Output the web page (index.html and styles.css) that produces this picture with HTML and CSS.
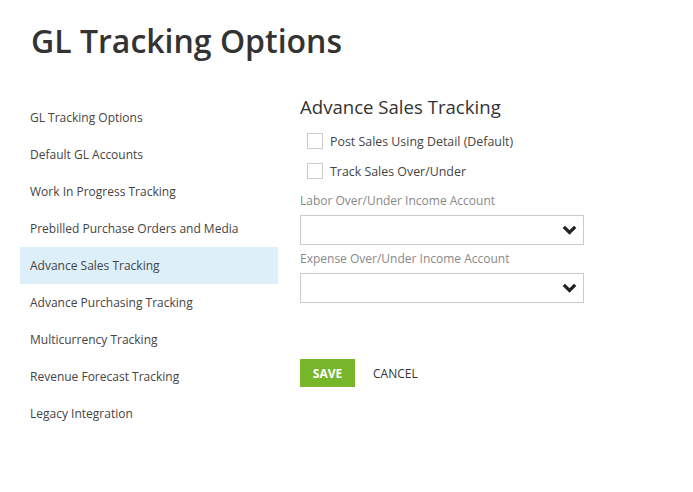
FILE: index.html
```html
<!DOCTYPE html>
<html>
<head>
<meta charset="utf-8">
<link rel="stylesheet" href="styles.css">
</head>
<body>
<div class="page">
  <h1 class="title">GL Tracking Options</h1>
  <div class="main">
    <ul class="nav">
      <li class="nav-item">GL Tracking Options</li>
      <li class="nav-item">Default GL Accounts</li>
      <li class="nav-item">Work In Progress Tracking</li>
      <li class="nav-item">Prebilled Purchase Orders and Media</li>
      <li class="nav-item active">Advance Sales Tracking</li>
      <li class="nav-item">Advance Purchasing Tracking</li>
      <li class="nav-item">Multicurrency Tracking</li>
      <li class="nav-item">Revenue Forecast Tracking</li>
      <li class="nav-item">Legacy Integration</li>
    </ul>
    <div class="content">
      <h2 class="section-title">Advance Sales Tracking</h2>
      <div class="checks">
        <label class="check"><span class="box"></span>Post Sales Using Detail (Default)</label>
        <label class="check"><span class="box"></span>Track Sales Over/Under</label>
      </div>
      <div class="field">
        <div class="field-label">Labor Over/Under Income Account</div>
        <div class="select">
          <svg class="chev" width="15" height="10" viewBox="0 0 15 10"><path d="M1.8 1.8 L7.5 7.5 L13.2 1.8" fill="none" stroke="#222" stroke-width="3.2"/></svg>
        </div>
      </div>
      <div class="field">
        <div class="field-label">Expense Over/Under Income Account</div>
        <div class="select">
          <svg class="chev" width="15" height="10" viewBox="0 0 15 10"><path d="M1.8 1.8 L7.5 7.5 L13.2 1.8" fill="none" stroke="#222" stroke-width="3.2"/></svg>
        </div>
      </div>
      <div class="actions">
        <button class="btn-save">SAVE</button>
        <button class="btn-cancel">CANCEL</button>
      </div>
    </div>
  </div>
</div>
</body>
</html>
```
FILE: styles.css
```css
* { box-sizing: border-box; }
html, body { margin: 0; padding: 0; background: #fff; }
body { font-family: "Open Sans", "Noto Sans", sans-serif; color: #444; }
.page { padding: 20px 20px 0 20px; }
.title {
  margin: 0 0 0 11px;
  font-size: 32px;
  font-weight: 600;
  color: #333;
  line-height: 42px;
}
.main { display: flex; margin-top: 37px; }
.nav { list-style: none; margin: 0; padding: 0; width: 258px; }
.nav-item {
  height: 37px;
  line-height: 37px;
  padding-left: 10px;
  font-size: 12px;
  color: #444;
}
.nav-item.active { background: #ddeff9; }
.content { margin-left: 22px; width: 284px; }
.section-title {
  margin: -5px 0 0 0;
  font-size: 18.6px;
  font-weight: 400;
  color: #333;
  line-height: 26px;
}
.checks { margin-top: 6px; }
.check {
  display: flex;
  align-items: center;
  height: 30px;
  font-size: 12.4px;
  color: #444;
}
.box {
  width: 16px; height: 16px;
  border: 1px solid #ccc;
  margin-left: 7px;
  margin-right: 7px;
  background: #fff;
}
.field { margin-top: 7px; }
.field + .field { margin-top: 6px; }
.field-label { font-size: 12px; color: #888; line-height: 16px; }
.select {
  margin-top: 6px;
  height: 30px;
  border: 1px solid #ccc;
  display: flex;
  align-items: center;
  justify-content: flex-end;
  padding-right: 6px;
}
.actions { display: flex; align-items: center; margin-top: 56px; }
.btn-save {
  width: 55px; height: 28px;
  border: none;
  background: #77b52a;
  color: #fff;
  font-family: inherit;
  font-weight: 700;
  font-size: 12px;
  padding: 0;
}
.btn-cancel {
  margin-left: 18px;
  border: none;
  background: none;
  font-family: inherit;
  font-size: 12px;
  color: #333;
  padding: 0;
}
```
